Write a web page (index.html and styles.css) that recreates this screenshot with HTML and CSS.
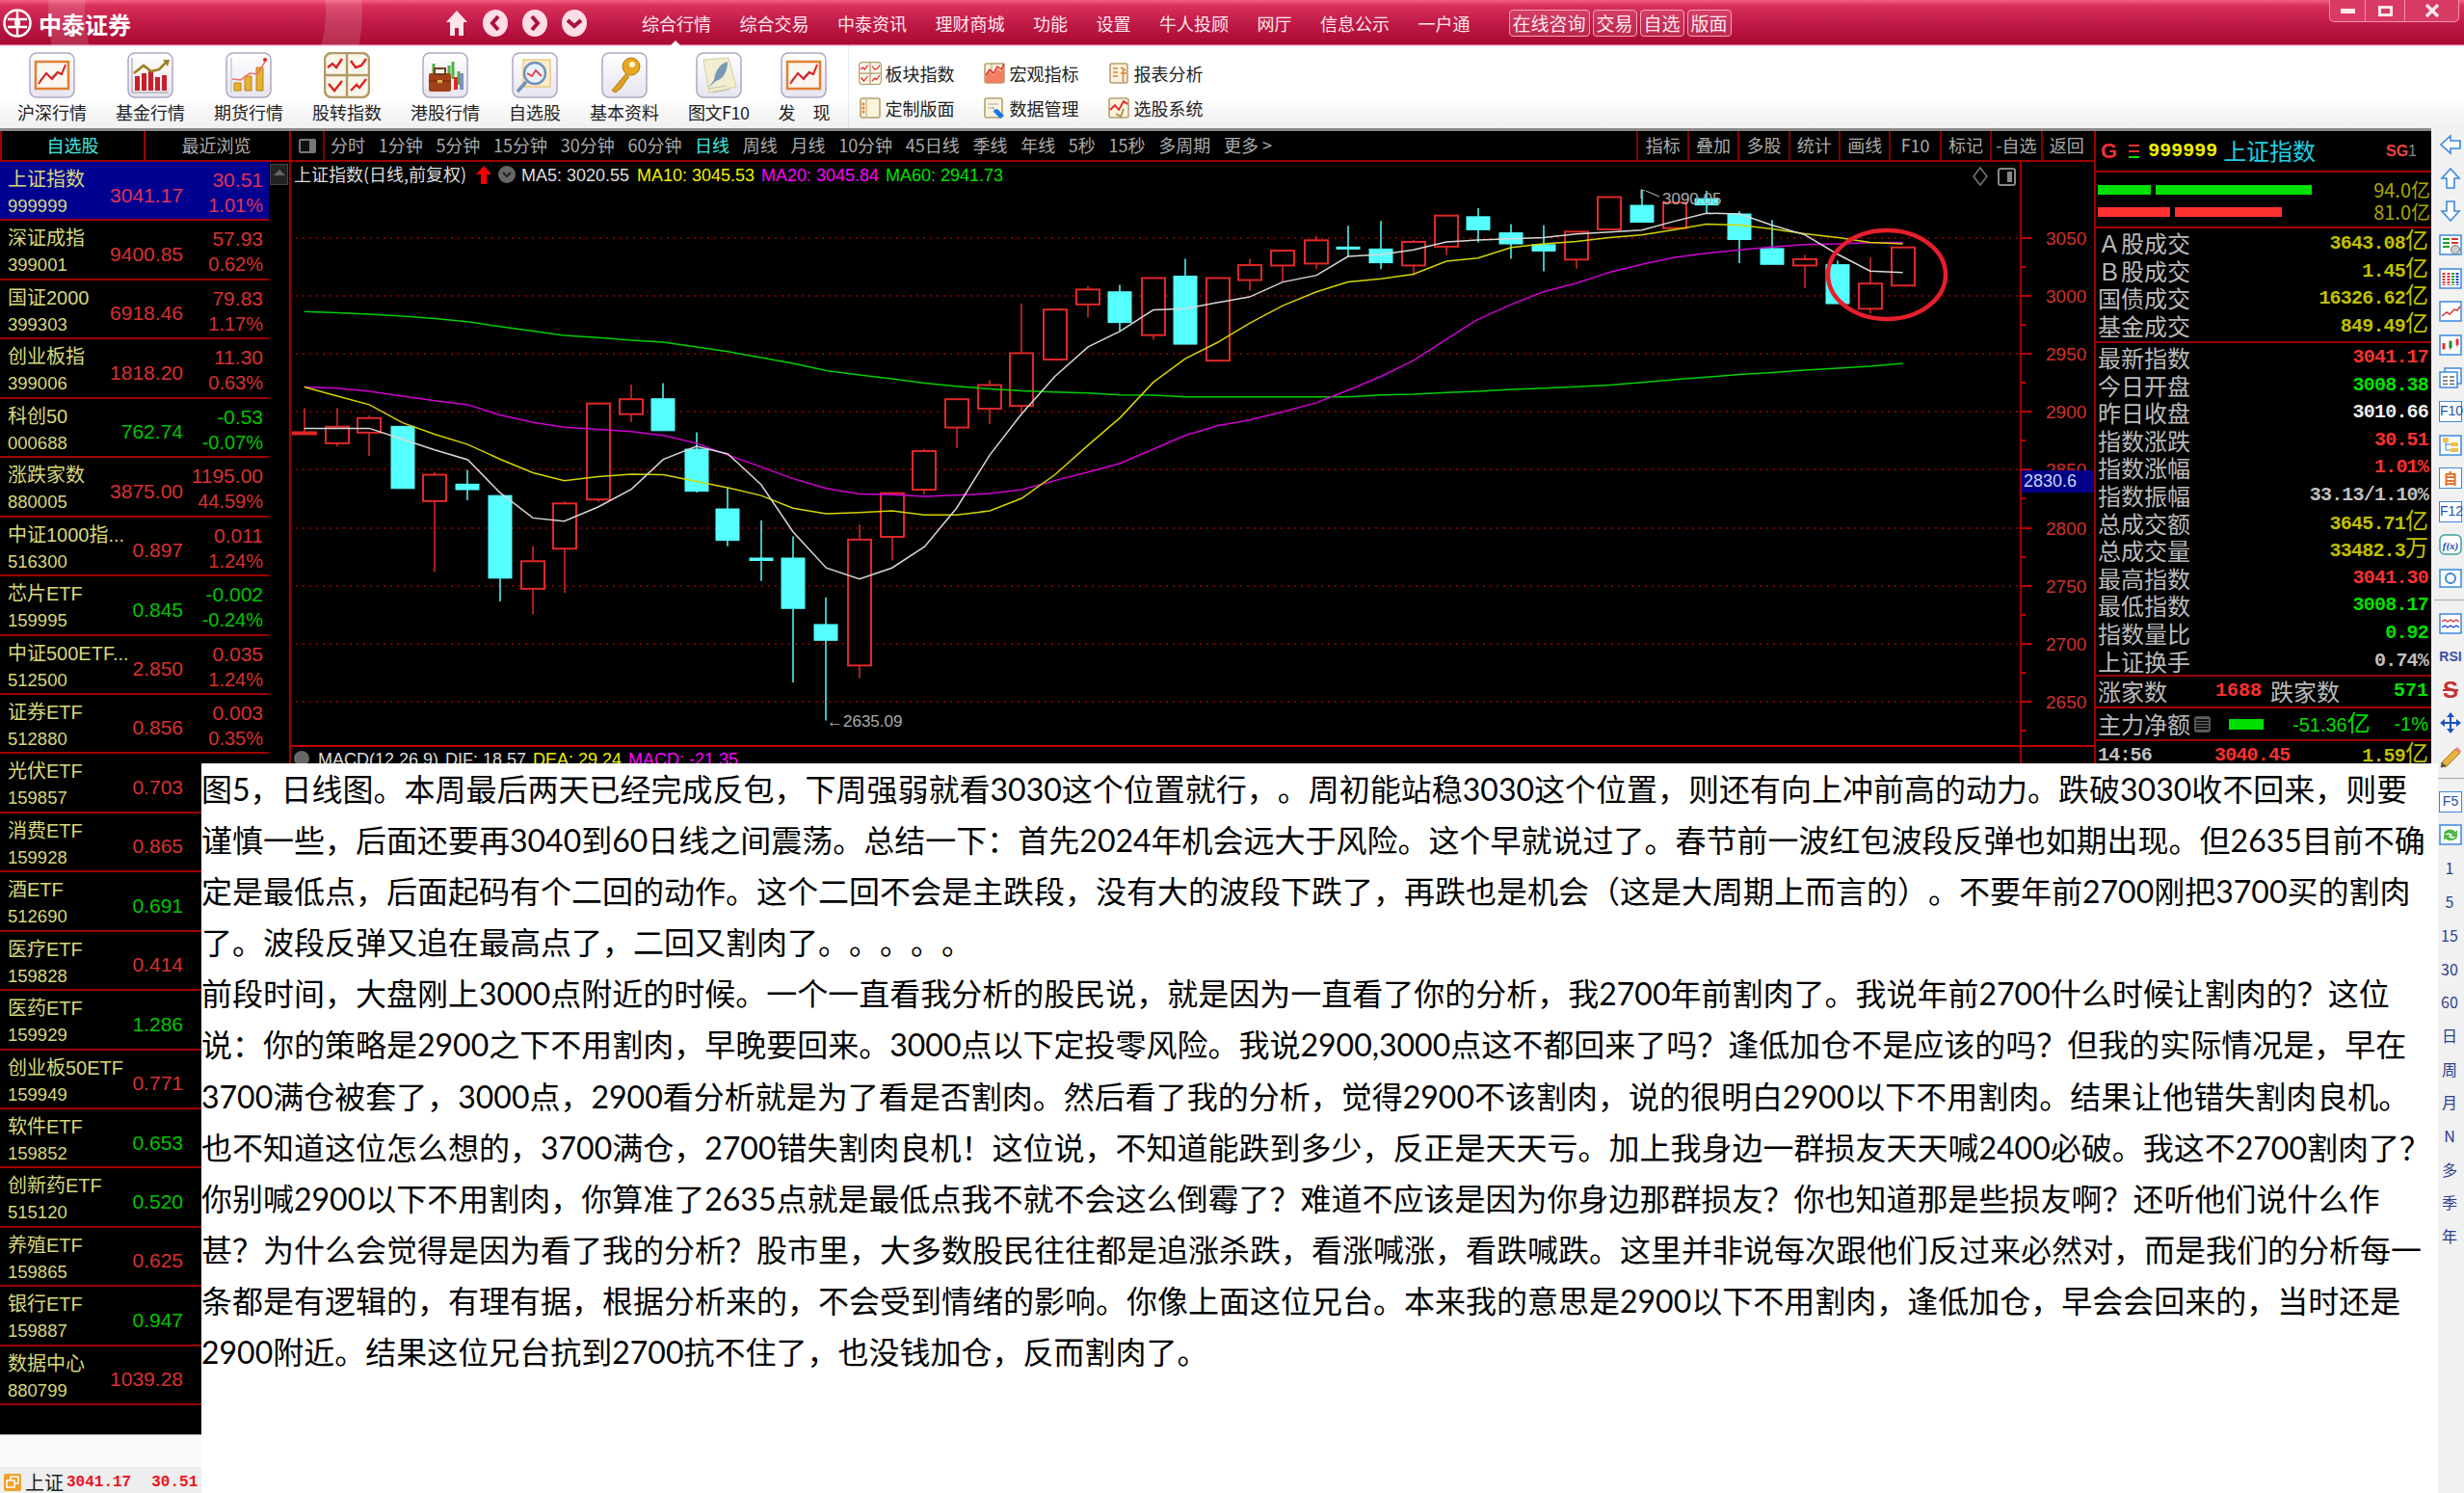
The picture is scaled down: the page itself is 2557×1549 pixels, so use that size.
FILE: index.html

```html
<!DOCTYPE html>
<html>
<head>
  <meta charset="UTF-8">
  <title>中泰证券 - 上证指数</title>
  <link rel="stylesheet" href="styles.css">
</head>
<body>

<svg class="defs" width="0" height="0">
  <defs>
    <linearGradient id="tile" x1="0" y1="0" x2="0" y2="1"><stop offset="0" stop-color="#fff"/><stop offset="1" stop-color="#e6e4ee"/></linearGradient>
    <symbol id="tile-frame" viewBox="0 0 48 48"><rect x="1" y="1" width="46" height="46" rx="7" fill="url(#tile)" stroke="#b0a6c6" stroke-width="1.5"/></symbol>
    <symbol id="ico-market" viewBox="0 0 48 48">
      <use href="#tile-frame"/>
      <rect x="7" y="10" width="34" height="28" fill="#fbf6ee" stroke="#e08030" stroke-width="2.5"/>
      <path d="M11 30l7-8 5 5 7-7" fill="none" stroke="#7c9ab0" stroke-width="1.5"/>
      <path d="M10 33l8-11 6 6 6-7 4 2 4-10" fill="none" stroke="#e02020" stroke-width="2"/>
    </symbol>
    <symbol id="ico-four" viewBox="0 0 48 48">
      <rect x="1" y="1" width="46" height="46" rx="7" fill="#fbf6ea" stroke="#b09a68" stroke-width="2.5"/>
      <path d="M24 2v44M2 24h44" stroke="#b09a68" stroke-width="2.5"/>
      <path d="M4 16l5-4 4 4 6-9M28 9l5 7 6-2 5-7M5 33l6 7 8-10M28 40l6-6 3 3 7-9" fill="none" stroke="#e02020" stroke-width="2.4"/>
    </symbol>
  </defs>
</svg>

<div class="app">

  <header class="titlebar">
    <div class="logo">
      <svg class="logo-mark" viewBox="0 0 30 30"><circle cx="15" cy="15" r="13.5" fill="none" stroke="#fff" stroke-width="2.6"/><path d="M15 3v24M5 11h8a4 4 0 0 1 0 8H5M25 11h-8a4 4 0 0 0 0 8h8" fill="none" stroke="#fff" stroke-width="2.4"/></svg>
      <span>中泰证券</span>
    </div>
    <div class="nav-icons">
      <svg class="nav-home" viewBox="0 0 24 28"><path d="M12 1L1 13h4v14h5v-8h4v8h5V13h4z" fill="#ffe4ea"/></svg>
      <svg class="nav-round" viewBox="0 0 26 28"><ellipse cx="13" cy="14" rx="13" ry="14" fill="#ffdde5"/><path d="M16 7l-6 7 6 7" fill="none" stroke="#a8123c" stroke-width="4"/></svg>
      <svg class="nav-round" viewBox="0 0 26 28"><ellipse cx="13" cy="14" rx="13" ry="14" fill="#ffdde5"/><path d="M10 7l6 7-6 7" fill="none" stroke="#a8123c" stroke-width="4"/></svg>
      <svg class="nav-round" viewBox="0 0 26 28"><ellipse cx="13" cy="14" rx="13" ry="14" fill="#ffdde5"/><path d="M6 11l7 6 7-6" fill="none" stroke="#a8123c" stroke-width="4"/></svg>
    </div>
    <nav class="menu">
      <span class="menu-current">综合行情</span>
      <span>综合交易</span>
      <span>中泰资讯</span>
      <span>理财商城</span>
      <span>功能</span>
      <span>设置</span>
      <span>牛人投顾</span>
      <span>网厅</span>
      <span>信息公示</span>
      <span>一户通</span>
    </nav>
    <div class="title-btns">
      <span>在线咨询</span>
      <span>交易</span>
      <span>自选</span>
      <span>版面</span>
    </div>
    <div class="win-btns">
      <div class="win-min"><i></i></div>
      <div class="win-max"><i></i></div>
      <div class="win-close"><svg viewBox="0 0 14 14"><path d="M1 1l12 12M13 1L1 13" stroke="#ffe8ee" stroke-width="3.4"/></svg></div>
    </div>
  </header>

  <section class="toolbar">
    <div class="tool"><svg class="tool-ico"><use href="#ico-market"/></svg><span>沪深行情</span></div>
    <div class="tool">
      <svg class="tool-ico" viewBox="0 0 48 48"><use href="#tile-frame"/><path d="M5 6v36h38" fill="none" stroke="#999" stroke-width="1"/><path d="M8 40V25h5v15zM15 40V22h5v18zM22 40V19h5v21zM29 40V26h5v14zM36 40V24h5v16z" fill="#c8202a"/><path d="M7 22l10-8 8 6 8-2 8-8" fill="none" stroke="#a08020" stroke-width="2.6"/><path d="M37 8l7 0-2 7z" fill="#a08020"/></svg>
      <span>基金行情</span>
    </div>
    <div class="tool">
      <svg class="tool-ico" viewBox="0 0 48 48"><use href="#tile-frame"/><path d="M6 6v36" stroke="#bbb"/><path d="M9 40V32h7v8zM20 40V25h7v15zM32 40V16h7v24z" fill="#e8b030" stroke="#b88410"/><path d="M7 28l9 1 9-7 8 1 8-13" fill="none" stroke="#f07070" stroke-width="1.6"/><circle cx="41" cy="8" r="2" fill="#e02020"/></svg>
      <span>期货行情</span>
    </div>
    <div class="tool"><svg class="tool-ico"><use href="#ico-four"/></svg><span>股转指数</span></div>
    <div class="tool">
      <svg class="tool-ico" viewBox="0 0 48 48"><use href="#tile-frame"/><path d="M12 30V12M38 34V20M32 28V10M28 24V14" stroke="#50b040" stroke-width="3"/><rect x="33" y="26" width="4" height="13" fill="#e02828"/><rect x="39" y="22" width="4" height="17" fill="#8090c0"/><rect x="7" y="22" width="23" height="19" rx="2" fill="#a04018"/><rect x="13" y="17" width="11" height="6" fill="none" stroke="#704020" stroke-width="2"/><path d="M7 30h23" stroke="#702808"/><rect x="16" y="29" width="5" height="3" fill="#e0b040"/></svg>
      <span>港股行情</span>
    </div>
    <div class="tool">
      <svg class="tool-ico" viewBox="0 0 48 48"><use href="#tile-frame"/><rect x="12" y="8" width="28" height="28" fill="#fbeecb" stroke="#e8b850"/><circle cx="24" cy="22" r="11" fill="#e8f2fa" stroke="#7090b8" stroke-width="2.4"/><path d="M16 22l5 3 4-6 6 6" fill="none" stroke="#e04040" stroke-width="1.8"/><path d="M15 31L6 41" stroke="#7090b8" stroke-width="3.4"/></svg>
      <span>自选股</span>
    </div>
    <div class="tool">
      <svg class="tool-ico" viewBox="0 0 48 48"><use href="#tile-frame"/><circle cx="31" cy="15" r="9" fill="#e8a820" stroke="#b07c10"/><circle cx="32" cy="13" r="3" fill="#fff6d8"/><path d="M26 22L11 40l4 2 3-3 2-1 9-13" fill="#e0a020" stroke="#b07c10"/></svg>
      <span>基本资料</span>
    </div>
    <div class="tool">
      <svg class="tool-ico" viewBox="0 0 48 48"><use href="#tile-frame"/><path d="M8 8l26-2 8 30-28 6z" fill="#f2eed2" stroke="#d8cf98"/><path d="M33 10c-8 2-13 10-14 19l-6 8 8-7c8-2 12-11 12-20z" fill="#7898b8"/><path d="M14 38l18-3M17 42l18-3" stroke="#c0c0b0"/></svg>
      <span class="tool-f10">图文F10</span>
    </div>
    <div class="tool"><svg class="tool-ico"><use href="#ico-market"/></svg><span>发&#12288;现</span></div>

    <div class="tool-grid">
      <div class="tool-sm"><svg class="tool-sm-ico" viewBox="0 0 48 48"><use href="#ico-four"/></svg><span>板块指数</span></div>
      <div class="tool-sm">
        <svg class="tool-sm-ico" viewBox="0 0 24 24"><rect x="2" y="2" width="20" height="20" rx="2" fill="#fbf3dd" stroke="#b8a070" stroke-width="1.6"/><path d="M9 2v20" stroke="#b8a070"/><path d="M3 22V15l4-5 4 4 4-7 4 3 3-7v19z" fill="#f08060"/><path d="M3 14l4-6 4 4 4-7 4 3 3-6" fill="none" stroke="#e02020" stroke-width="1.4"/></svg>
        <span>宏观指标</span>
      </div>
      <div class="tool-sm">
        <svg class="tool-sm-ico" viewBox="0 0 24 24"><rect x="3" y="2" width="18" height="20" rx="2" fill="#fbf3dd" stroke="#b8a070" stroke-width="1.6"/><path d="M6 7h5M6 11h5M6 15h5M14 6l5 3M14 12h6M16.5 9v12" stroke="#e08030" stroke-width="1.6"/></svg>
        <span>报表分析</span>
      </div>
      <div class="tool-sm">
        <svg class="tool-sm-ico" viewBox="0 0 24 24"><rect x="2" y="2" width="20" height="20" rx="2" fill="#fbf3dd" stroke="#b8a070" stroke-width="1.6"/><path d="M8 3v18" stroke="#b8a070"/><circle cx="5" cy="8" r="1.5" fill="#e8802c"/><circle cx="5" cy="12" r="1.5" fill="#e8802c"/><circle cx="5" cy="16" r="1.5" fill="#e8802c"/></svg>
        <span>定制版面</span>
      </div>
      <div class="tool-sm">
        <svg class="tool-sm-ico" viewBox="0 0 24 24"><rect x="2" y="2" width="18" height="20" rx="2" fill="#fbf3dd" stroke="#b8a070" stroke-width="1.6"/><path d="M5 8h11M5 12h7" stroke="#aaa"/><path d="M9 10l3 3-1 3 7 7 4-3-7-7-3 1-3-4z" fill="#1878e8"/></svg>
        <span>数据管理</span>
      </div>
      <div class="tool-sm">
        <svg class="tool-sm-ico" viewBox="0 0 24 24"><rect x="2" y="2" width="20" height="20" rx="2" fill="#fbf3dd" stroke="#b8a070" stroke-width="1.6"/><path d="M3 14l5-5 4 5 5-9 4 3" fill="none" stroke="#e02020" stroke-width="1.8"/><path d="M9 18l5 3 3-8" fill="none" stroke="#b09050" stroke-width="2"/></svg>
        <span>选股系统</span>
      </div>
    </div>
  </section>

  <div class="body">
    <div class="panes">
      <div class="workspace">

        <aside class="watchlist">
          <div class="tabs">
            <span class="tab tab-on">自选股</span>
            <span class="tab">最近浏览</span>
          </div>
          <div class="list-wrap">
            <div class="rows">
              <div class="row up active"><span class="name">上证指数</span><span class="code">999999</span><span class="price">3041.17</span><span class="chg">30.51</span><span class="pct">1.01%</span></div>
              <div class="row up"><span class="name">深证成指</span><span class="code">399001</span><span class="price">9400.85</span><span class="chg">57.93</span><span class="pct">0.62%</span></div>
              <div class="row up"><span class="name">国证2000</span><span class="code">399303</span><span class="price">6918.46</span><span class="chg">79.83</span><span class="pct">1.17%</span></div>
              <div class="row up"><span class="name">创业板指</span><span class="code">399006</span><span class="price">1818.20</span><span class="chg">11.30</span><span class="pct">0.63%</span></div>
              <div class="row down"><span class="name">科创50</span><span class="code">000688</span><span class="price">762.74</span><span class="chg">-0.53</span><span class="pct">-0.07%</span></div>
              <div class="row up"><span class="name">涨跌家数</span><span class="code">880005</span><span class="price">3875.00</span><span class="chg">1195.00</span><span class="pct">44.59%</span></div>
              <div class="row up"><span class="name">中证1000指...</span><span class="code">516300</span><span class="price">0.897</span><span class="chg">0.011</span><span class="pct">1.24%</span></div>
              <div class="row down"><span class="name">芯片ETF</span><span class="code">159995</span><span class="price">0.845</span><span class="chg">-0.002</span><span class="pct">-0.24%</span></div>
              <div class="row up"><span class="name">中证500ETF...</span><span class="code">512500</span><span class="price">2.850</span><span class="chg">0.035</span><span class="pct">1.24%</span></div>
              <div class="row up"><span class="name">证券ETF</span><span class="code">512880</span><span class="price">0.856</span><span class="chg">0.003</span><span class="pct">0.35%</span></div>
              <div class="row up"><span class="name">光伏ETF</span><span class="code">159857</span><span class="price">0.703</span></div>
              <div class="row up"><span class="name">消费ETF</span><span class="code">159928</span><span class="price">0.865</span></div>
              <div class="row down"><span class="name">酒ETF</span><span class="code">512690</span><span class="price">0.691</span></div>
              <div class="row up"><span class="name">医疗ETF</span><span class="code">159828</span><span class="price">0.414</span></div>
              <div class="row down"><span class="name">医药ETF</span><span class="code">159929</span><span class="price">1.286</span></div>
              <div class="row up"><span class="name">创业板50ETF</span><span class="code">159949</span><span class="price">0.771</span></div>
              <div class="row down"><span class="name">软件ETF</span><span class="code">159852</span><span class="price">0.653</span></div>
              <div class="row down"><span class="name">创新药ETF</span><span class="code">515120</span><span class="price">0.520</span></div>
              <div class="row up"><span class="name">养殖ETF</span><span class="code">159865</span><span class="price">0.625</span></div>
              <div class="row down"><span class="name">银行ETF</span><span class="code">159887</span><span class="price">0.947</span></div>
              <div class="row up"><span class="name">数据中心</span><span class="code">880799</span><span class="price">1039.28</span></div>
            </div>
            <div class="scroll"><div class="scroll-up"></div></div>
          </div>
        </aside>

        <main class="chart-col">
          <div class="periods">
            <div class="period-toggle"><i></i></div>
            <div class="period-list">
              <span>分时</span><span>1分钟</span><span>5分钟</span><span>15分钟</span><span>30分钟</span><span>60分钟</span>
              <span class="period-on">日线</span><span>周线</span><span>月线</span><span>10分钟</span><span>45日线</span>
              <span>季线</span><span>年线</span><span>5秒</span><span>15秒</span><span>多周期</span><span>更多 &gt;</span>
            </div>
            <div class="period-tabs">
              <span>指标</span><span>叠加</span><span>多股</span><span>统计</span><span>画线</span><span>F10</span><span>标记</span><span>-自选</span><span>返回</span>
            </div>
          </div>

          <svg id="chart" class="chart" viewBox="300 168 1873 712">
            <g id="grid"></g>
            <g id="candles"></g>
            <g id="averages"></g>

            <text x="305" y="188" class="t-cap t-white">上证指数(日线,前复权)</text>
            <path d="M502 172l8 9h-5v10h-6v-10h-5z" fill="#f00"/>
            <circle cx="526" cy="181" r="9" fill="#666"/>
            <path d="M522 179l4 4 4-4" fill="none" stroke="#222" stroke-width="2"/>
            <text x="541" y="188" class="t-num t-white">MA5: 3020.55</text>
            <text x="661" y="188" class="t-num t-yellow">MA10: 3045.53</text>
            <text x="790" y="188" class="t-num t-magenta">MA20: 3045.84</text>
            <text x="919" y="188" class="t-num t-green">MA60: 2941.73</text>

            <path d="M2055 174l7 9-7 9-7-9z" fill="none" stroke="#777" stroke-width="1.5"/>
            <rect x="2074" y="175" width="17" height="17" rx="2" fill="none" stroke="#888" stroke-width="2"/>
            <rect x="2083" y="178" width="5" height="11" fill="#888"/>

            <path d="M1703 197v9M1703 197l4 1M1708 198l14 6" stroke="#bbb" fill="none"/>
            <text x="1725" y="212" class="t-mark">3090.05</text>
            <text x="858" y="754" class="t-mark">←2635.09</text>

            <ellipse cx="1958" cy="285" rx="61" ry="46" fill="none" stroke="#e81e2c" stroke-width="4.5"/>

            <rect x="2098" y="488" width="76" height="23" fill="#000088"/>
            <text x="2100" y="505" class="t-tag">2830.6</text>

            <circle cx="313" cy="787" r="8" fill="#666"/>
            <text x="330" y="794" class="t-num t-white">MACD(12,26,9)</text>
            <text x="462" y="794" class="t-num t-white">DIF: 18.57</text>
            <text x="553" y="794" class="t-num t-yellow">DEA: 29.24</text>
            <text x="652" y="794" class="t-num t-magenta">MACD: -21.35</text>
          </svg>
        </main>

        <aside class="quote">
          <div class="q-head">
            <span class="q-g">G</span>
            <span class="q-menu"><i></i><i></i><i></i></span>
            <span class="q-code">999999</span>
            <span class="q-name">上证指数</span>
            <span class="q-sg"><b>SG</b>1</span>
          </div>
          <div class="q-flow">
            <div class="flow-row"><div class="flow-bars"><i class="bar-green flow-a"></i><i class="bar-green flow-b"></i></div><span>94.0亿</span></div>
            <div class="flow-row"><div class="flow-bars"><i class="bar-red flow-c"></i><i class="bar-red flow-d"></i></div><span>81.0亿</span></div>
          </div>
          <div class="q-group q-deals">
            <div class="q-row"><span>Ａ股成交</span><b class="v-yellow">3643.08<small>亿</small></b></div>
            <div class="q-row"><span>Ｂ股成交</span><b class="v-yellow">1.45<small>亿</small></b></div>
            <div class="q-row"><span>国债成交</span><b class="v-yellow">16326.62<small>亿</small></b></div>
            <div class="q-row"><span>基金成交</span><b class="v-yellow">849.49<small>亿</small></b></div>
          </div>
          <div class="q-group q-index">
            <div class="q-row"><span>最新指数</span><b class="v-red">3041.17</b></div>
            <div class="q-row"><span>今日开盘</span><b class="v-green">3008.38</b></div>
            <div class="q-row"><span>昨日收盘</span><b class="v-white">3010.66</b></div>
            <div class="q-row"><span>指数涨跌</span><b class="v-red">30.51</b></div>
            <div class="q-row"><span>指数涨幅</span><b class="v-red">1.01%</b></div>
            <div class="q-row"><span>指数振幅</span><b class="v-gray">33.13/1.10%</b></div>
            <div class="q-row"><span>总成交额</span><b class="v-yellow">3645.71<small>亿</small></b></div>
            <div class="q-row"><span>总成交量</span><b class="v-yellow">33482.3<small>万</small></b></div>
            <div class="q-row"><span>最高指数</span><b class="v-red">3041.30</b></div>
            <div class="q-row"><span>最低指数</span><b class="v-green">3008.17</b></div>
            <div class="q-row"><span>指数量比</span><b class="v-green">0.92</b></div>
            <div class="q-row"><span>上证换手</span><b class="v-gray">0.74%</b></div>
          </div>
          <div class="q-group q-breadth">
            <span>涨家数</span><b class="v-red b-up">1688</b><span class="b-label">跌家数</span><b class="v-green b-down">571</b>
          </div>
          <div class="q-group q-main">
            <span>主力净额</span>
            <i class="q-list-ico"></i>
            <i class="q-main-bar"></i>
            <b class="v-green q-main-val">-51.36<small>亿</small></b>
            <b class="v-green q-main-pct">-1%</b>
          </div>
          <div class="q-tick">
            <b class="v-gray">14:56</b><b class="v-red tick-price">3040.45</b><b class="v-yellow tick-vol">1.59<small>亿</small></b>
          </div>
        </aside>
      </div>

      <footer class="foot">
        <div class="foot-blank"></div>
        <div class="foot-index">
          <svg class="foot-ico" viewBox="0 0 20 20"><rect x="1" y="1" width="18" height="18" rx="2" fill="#eda12c"/><rect x="8" y="4" width="8" height="7" fill="none" stroke="#fff" stroke-width="1.5"/><rect x="4" y="8" width="8" height="7" fill="#eda12c" stroke="#fff" stroke-width="1.5"/></svg>
          <span class="foot-name">上证</span>
          <b>3041.17</b>
          <b class="foot-chg">30.51</b>
        </div>
      </footer>
    </div>

    <aside class="sidebar">
      <div class="side-item"><svg viewBox="0 0 24 24"><path d="M2 12l10-9v5h10v8H12v5z" fill="#fff" stroke="#3a88e0" stroke-width="1.6"/></svg></div>
      <div class="side-item"><svg viewBox="0 0 24 24"><path d="M12 2l9 10h-5v10H8V12H3z" fill="#fff" stroke="#3a88e0" stroke-width="1.6"/></svg></div>
      <div class="side-item"><svg viewBox="0 0 24 24"><path d="M12 22l9-10h-5V2H8v10H3z" fill="#fff" stroke="#3a88e0" stroke-width="1.6"/></svg></div>
      <div class="side-item"><svg viewBox="0 0 24 24"><rect x="1" y="2" width="22" height="20" fill="#fff" stroke="#3a88e0" stroke-width="1.5"/><path d="M4 6h7M4 10h7M4 14h7" stroke="#20a030" stroke-width="2"/><path d="M13 6h7M13 10h7" stroke="#e03030" stroke-width="2"/><circle cx="17" cy="17" r="4.5" fill="#ccc" stroke="#777"/></svg></div>
      <div class="side-item"><svg viewBox="0 0 24 24"><rect x="1" y="2" width="22" height="20" fill="#fff" stroke="#3a88e0" stroke-width="1.5"/><path d="M5 6v13M10 6v13" stroke="#e03030" stroke-width="3" stroke-dasharray="2 1"/><path d="M14.5 6v13" stroke="#20a030" stroke-width="3" stroke-dasharray="2 1"/><path d="M19 6v13" stroke="#2040e0" stroke-width="3" stroke-dasharray="2 1"/></svg></div>
      <div class="side-item"><svg viewBox="0 0 24 24"><rect x="1" y="2" width="22" height="20" fill="#fff" stroke="#3a88e0" stroke-width="1.5"/><path d="M3 17l5-4 3 2 5-5 3 1 3-4" fill="none" stroke="#e03030" stroke-width="1.5"/></svg></div>
      <div class="side-item"><svg viewBox="0 0 24 24"><rect x="1" y="2" width="22" height="20" fill="#fff" stroke="#3a88e0" stroke-width="1.5"/><path d="M5 10v7M12 7v10M19 5v9" stroke="#e03030" stroke-width="1"/><rect x="3.5" y="10" width="3" height="6" fill="#e03030"/><rect x="10.5" y="8" width="3" height="7" fill="#109030"/><rect x="17.5" y="6" width="3" height="6" fill="#e03030"/></svg></div>
      <div class="side-item"><svg viewBox="0 0 24 24"><rect x="6" y="2" width="17" height="16" fill="#fff" stroke="#3a88e0" stroke-width="1.5"/><rect x="1" y="6" width="18" height="16" fill="#fff" stroke="#3a88e0" stroke-width="1.5"/><path d="M4 11h5M11 11h5M4 15h5M11 15h5M4 18.5h5M11 18.5h5" stroke="#666" stroke-width="1.4"/></svg></div>
      <div class="side-item side-text-box"><span>F10</span></div>
      <div class="side-item"><svg viewBox="0 0 24 24"><rect x="1" y="2" width="22" height="20" fill="#fff" stroke="#3a88e0" stroke-width="1.5"/><rect x="4" y="4" width="6" height="5" fill="#f0c040"/><rect x="12" y="9" width="8" height="4" fill="#f0c040"/><rect x="12" y="15" width="8" height="4" fill="#f0c040"/><path d="M7 9v8h5M7 11h5" fill="none" stroke="#3a88e0"/></svg></div>
      <div class="side-item side-text-box side-zi"><span>自</span></div>
      <div class="side-item side-text-box"><span>F12</span></div>
      <div class="side-item"><svg viewBox="0 0 24 24"><rect x="1" y="2" width="22" height="20" rx="5" fill="#fff" stroke="#40a0a0" stroke-width="1.5"/><text x="12" y="17" class="side-fx">f(x)</text></svg></div>
      <div class="side-item"><svg viewBox="0 0 24 24"><rect x="1" y="3" width="22" height="18" fill="#fff" stroke="#3a88e0" stroke-width="1.5"/><circle cx="12" cy="12" r="5" fill="none" stroke="#3a88e0" stroke-width="2"/></svg></div>
      <div class="side-sep"></div>
      <div class="side-item"><svg viewBox="0 0 24 24"><rect x="1" y="2" width="22" height="20" fill="#fff" stroke="#3a88e0" stroke-width="1.5"/><path d="M3 10l3-2 3 2 3-2 3 2 3-2 3 2" fill="none" stroke="#e03030" stroke-width="1.4"/><path d="M3 16l3-2 3 2 3-2 3 2 3-2 3 2" fill="none" stroke="#2040e0" stroke-width="1.4"/></svg></div>
      <div class="side-item side-rsi">RSI</div>
      <div class="side-item side-dollar">S</div>
      <div class="side-item"><svg viewBox="0 0 24 24"><path d="M12 1l4 5h-3v5h5V8l5 4-5 4v-3h-5v5h3l-4 5-4-5h3v-5H6v3l-5-4 5-4v3h5V6H8z" fill="#1a50c0"/></svg></div>
      <div class="side-item"><svg viewBox="0 0 24 24"><path d="M3 18L17 4l5 4L8 22l-6 1z" fill="#eab040" stroke="#a87820"/><path d="M17 4l2-2 4 4-1 2z" fill="#e88"/><path d="M2 23l1-5 5 4z" fill="#555"/></svg></div>
      <div class="side-sep"></div>
      <div class="side-item side-text-box"><span>F5</span></div>
      <div class="side-item"><svg viewBox="0 0 24 24"><rect x="1" y="2" width="22" height="20" fill="#fff" stroke="#3a88e0" stroke-width="1.5"/><path d="M5 11c1-5 9-6 12-2l2-2v7h-7l2-2c-2-2-6-2-7 0zM19 14c-1 4-9 6-12 2l-2 2v-6h7l-2 2c2 2 6 2 7 0z" fill="#50b848"/></svg></div>
      <div class="side-periods">
        <span>1</span><span>5</span><span>15</span><span>30</span><span>60</span><span>日</span><span>周</span><span>月</span><span>N</span><span>多</span><span>季</span><span>年</span>
      </div>
    </aside>
  </div>

  <article class="note">
    <p>图5，日线图。本周最后两天已经完成反包，下周强弱就看3030这个位置就行，。周初能站稳3030这个位置，则还有向上冲前高的动力。跌破3030收不回来，则要<br>谨慎一些，后面还要再3040到60日线之间震荡。总结一下：首先2024年机会远大于风险。这个早就说过了。春节前一波红包波段反弹也如期出现。但2635目前不确<br>定是最低点，后面起码有个二回的动作。这个二回不会是主跌段，没有大的波段下跌了，再跌也是机会（这是大周期上而言的）。不要年前2700刚把3700买的割肉<br>了。波段反弹又追在最高点了，二回又割肉了。。。。。</p>
    <p>前段时间，大盘刚上3000点附近的时候。一个一直看我分析的股民说，就是因为一直看了你的分析，我2700年前割肉了。我说年前2700什么时候让割肉的？这位<br>说：你的策略是2900之下不用割肉，早晚要回来。3000点以下定投零风险。我说2900,3000点这不都回来了吗？逢低加仓不是应该的吗？但我的实际情况是，早在<br>3700满仓被套了，3000点，2900看分析就是为了看是否割肉。然后看了我的分析，觉得2900不该割肉，说的很明白2900以下不用割肉。结果让他错失割肉良机。<br>也不知道这位怎么想的，3700满仓，2700错失割肉良机！这位说，不知道能跌到多少，反正是天天亏。加上我身边一群损友天天喊2400必破。我这不2700割肉了？<br>你别喊2900以下不用割肉，你算准了2635点就是最低点我不就不会这么倒霉了？难道不应该是因为你身边那群损友？你也知道那是些损友啊？还听他们说什么作<br>甚？为什么会觉得是因为看了我的分析？股市里，大多数股民往往都是追涨杀跌，看涨喊涨，看跌喊跌。这里并非说每次跟他们反过来必然对，而是我们的分析每一<br>条都是有逻辑的，有理有据，根据分析来的，不会受到情绪的影响。你像上面这位兄台。本来我的意思是2900以下不用割肉，逢低加仓，早会会回来的，当时还是<br>2900附近。结果这位兄台抗到2700抗不住了，也没钱加仓，反而割肉了。</p>
  </article>

</div>

<script src="chart.js"></script>
</body>
</html>
```

FILE: styles.css

```css
* { box-sizing: border-box; }
html, body { margin: 0; height: 100%; overflow: hidden; }
body {
  background: #000;
  color: #bbb;
  font-family: "Noto Sans CJK SC", "Liberation Sans", sans-serif;
  font-size: 18px;
  text-spacing-trim: space-all;
}
.defs { position: absolute; }
.app { position: relative; width: 2557px; height: 1549px; display: flex; flex-direction: column; overflow: hidden; }

/* title bar */
.titlebar {
  position: relative;
  height: 48px;
  flex: none;
  display: flex;
  align-items: center;
  overflow: hidden;
  color: #ffe6ec;
  background: linear-gradient(#f4607f 0, #d8305a 6px, #c01a48 24px, #aa0a30 46px, #fce 47px);
}
.titlebar::before {
  content: "";
  position: absolute;
  left: 50px;
  top: -150px;
  width: 250px;
  height: 250px;
  border-radius: 50%;
  border: 38px solid rgba(255, 255, 255, 0.14);
}
.logo { position: relative; display: flex; align-items: center; gap: 7px; width: 462px; padding-left: 3px; color: #fff; font-size: 24px; font-weight: 700; }
.logo-mark { width: 30px; height: 30px; }
.nav-icons { position: relative; display: flex; align-items: center; gap: 15px; width: 204px; }
.nav-home { width: 24px; height: 28px; }
.nav-round { width: 26px; height: 28px; }
.menu { display: flex; gap: 29.5px; }
.menu-current { position: relative; }
.menu-current::after {
  content: "";
  position: absolute;
  left: 29px;
  bottom: -11px;
  border: 6px solid transparent;
  border-top: 0;
  border-bottom-color: #fff;
}
.title-btns { display: flex; gap: 3px; margin-left: 40px; }
.title-btns span {
  height: 28px;
  line-height: 25px;
  padding: 0 3px;
  border: 1px solid #f8a2b8;
  border-radius: 4px;
  font-size: 19px;
  background: rgba(255, 255, 255, 0.1);
}
.win-btns {
  display: flex;
  align-self: flex-start;
  position: absolute;
  right: 5px;
  top: 0;
  height: 23px;
  border: 1px solid #f490a8;
  border-top: 0;
  border-radius: 0 0 5px 5px;
  background: #d93a64;
}
.win-btns > div { display: flex; align-items: center; justify-content: center; border-left: 1px solid #f490a8; }
.win-btns > div:first-child { border-left: 0; }
.win-min { width: 36px; }
.win-max { width: 41px; }
.win-close { width: 56px; }
.win-min i { width: 15px; height: 5px; background: #ffe8ee; }
.win-max i { width: 15px; height: 11px; border: 3px solid #ffe8ee; }
.win-close svg { width: 14px; height: 14px; }

/* toolbar */
.toolbar {
  height: 88px;
  flex: none;
  display: flex;
  gap: 30px;
  padding: 6px 0 0 18px;
  background: linear-gradient(#fff 60%, #f0f0f0);
  border-bottom: 3px solid #8a8a8a;
  color: #222;
}
.tool { display: flex; flex-direction: column; align-items: center; line-height: 26px; }
.tool-ico { width: 48px; height: 48px; margin-bottom: 1px; }
.tool-f10 { letter-spacing: -0.5px; }
.tool-grid {
  display: grid;
  grid-template-columns: 129px 129px 129px;
  grid-auto-rows: 36px;
  margin: -6px 0 0 -11px;
  padding: 10px 0 0 10px;
  border-left: 1px dotted #c8d8e8;
}
.tool-sm { display: flex; align-items: center; gap: 3px; }
.tool-sm-ico { width: 24px; height: 24px; }

/* layout below the bars */
.body { flex: 1; display: flex; min-height: 0; }
.panes { width: 2523px; flex: none; display: flex; flex-direction: column; }
.workspace { height: 1352px; flex: none; display: flex; background: #000; }
.foot { flex: 1; background: #fff; }
.foot-blank { height: 34px; background: #f9f9f9; border-top: 1px solid #aaa; }
.foot-index { height: 27px; display: flex; align-items: flex-start; background: #eee; padding: 6px 0 0 3px; color: #222; }
.foot-ico { width: 20px; height: 20px; flex: none; }
.foot-name { margin: 0 3px; font-size: 20px; line-height: 20px; }
.foot-index b { font: 700 16px/20px "Liberation Mono", monospace; color: #f01020; }
.foot-index .foot-chg { margin-left: 21px; }

/* watch list */
.watchlist { width: 300px; flex: none; display: flex; flex-direction: column; }
.tabs { height: 32px; flex: none; display: flex; border-bottom: 2px solid #a00000; }
.tab { width: 149px; text-align: center; line-height: 29px; border-left: 2px solid #a00000; color: #aaa; }
.tab-on { color: #40e8e0; }
.list-wrap { display: flex; }
.rows { width: 279px; flex: none; }
.scroll { flex: 1; padding: 2px 1px; }
.scroll-up { position: relative; height: 22px; background: #222; border: 1px solid #444; }
.scroll-up::after {
  content: "";
  position: absolute;
  left: 3px;
  top: 5px;
  border: 6px solid transparent;
  border-top: 0;
  border-bottom-color: #666;
}
.row {
  height: 61.45px;
  display: grid;
  grid-template-columns: 182px 83px;
  grid-template-rows: 27px 27px;
  padding: 5px 0 0 8px;
  border-bottom: 2px solid #a00000;
  font-family: "Liberation Sans", "Noto Sans CJK SC", sans-serif;
  white-space: nowrap;
}
.row.active { background: #000090; }
.name { grid-area: 1 / 1; font-size: 20px; line-height: 27px; color: #d8d87c; }
.code { grid-area: 2 / 1; font-size: 18.5px; line-height: 27px; color: #d8d87c; }
.price { grid-area: 1 / 1 / 3 / 2; align-self: center; justify-self: end; padding-top: 5px; font-size: 21px; }
.chg { grid-area: 1 / 2; justify-self: end; font-size: 21px; line-height: 27px; }
.pct { grid-area: 2 / 2; justify-self: end; font-size: 20px; line-height: 27px; }
.row.up { color: #d83030; }
.row.down { color: #00c400; }
.row.active { color: #e03058; }

/* chart */
.chart-col { width: 1873px; flex: none; overflow: hidden; }
.periods { height: 32px; display: flex; border-bottom: 2px solid #a00000; border-left: 2px solid #a00000; color: #aaa; white-space: nowrap; }
.period-toggle { width: 35px; flex: none; display: flex; align-items: center; justify-content: center; border-right: 2px solid #800000; }
.period-toggle i { width: 18px; height: 15px; border: 2px solid #777; border-right-width: 7px; border-radius: 2px; background: #111; }
.period-list { display: flex; gap: 13.7px; padding-left: 6px; line-height: 29px; }
.period-on { color: #40e8e0; }
.period-tabs { display: flex; margin-left: auto; padding-right: 3px; }
.period-tabs span { width: 52.4px; text-align: center; line-height: 29px; border-left: 2px solid #800000; }
.chart { display: block; width: 1873px; height: 712px; }
.t-cap { font: 18px "Noto Sans CJK SC", sans-serif; }
.t-num { font: 18px "Liberation Sans", sans-serif; }
.t-mark { font: 17px "Liberation Sans", sans-serif; fill: #aaa; }
.t-tag { font: 18px "Liberation Sans", sans-serif; fill: #ccd4f0; }
.t-axis { font: 19px "Liberation Sans", sans-serif; fill: #d03030; }
.t-white { fill: #ddd; }
.t-yellow { fill: #f0f000; }
.t-magenta { fill: #ff00ff; }
.t-green { fill: #00e000; }

/* quote panel */
.quote { width: 350px; flex: none; height: 680px; border-left: 2px solid #a00000; white-space: nowrap; font-size: 24px; line-height: 28.6px; }
.quote b { font: 700 20px/28.6px "Liberation Mono", monospace; letter-spacing: -0.8px; }
.quote small { font: 400 24px/20px "Noto Sans CJK SC", sans-serif; letter-spacing: 0; }
.q-head { height: 43px; display: flex; align-items: center; padding-left: 5px; border-bottom: 2px solid #a00000; }
.q-g { color: #f03030; font: 700 22px "Liberation Sans", sans-serif; }
.q-menu { display: flex; flex-direction: column; gap: 4px; width: 11px; margin: 0 9px 0 12px; }
.q-menu i { height: 2px; background: #f03030; }
.q-menu i:last-child { background: #00e000; }
.q-code { color: #f0f000; font: 700 20px "Liberation Mono", monospace; width: 78px; }
.q-name { color: #20d0e0; font-size: 24px; }
.q-sg { margin-left: auto; margin-right: 15px; color: #888; font: 400 16px "Liberation Sans", sans-serif; }
.q-sg b { font: 700 16px "Liberation Sans", sans-serif; color: #f04040; letter-spacing: 0; }
.q-flow { height: 58px; padding: 6px 1px 0 2px; border-bottom: 2px solid #a00000; }
.flow-row { display: flex; justify-content: space-between; align-items: center; height: 23px; line-height: 23px; color: #a8a800; font-size: 20px; }
.flow-bars { display: flex; gap: 5px; }
.flow-bars i { height: 10px; }
.bar-green { background: #00e000; }
.bar-red { background: #ff3030; }
.flow-a { width: 55px; }
.flow-b { width: 162px; }
.flow-c { width: 75px; }
.flow-d { width: 111px; }
.q-group { border-bottom: 2px solid #a00000; padding: 0 3px 0 2px; }
.q-deals { height: 119px; padding-top: 1px; }
.q-index { height: 346px; padding-top: 1px; }
.q-row { display: flex; justify-content: space-between; height: 28.6px; }
.v-yellow { color: #c0c000; }
.v-red { color: #ff3030; }
.v-green { color: #00e000; }
.v-white { color: #eee; }
.v-gray { color: #c0c0c0; }
.q-breadth { height: 33px; display: flex; align-items: center; }
.q-breadth b { letter-spacing: 0; }
.b-up { width: 52px; margin-left: 50px; }
.b-label { margin-left: 5px; }
.b-down { margin-left: auto; }
.q-main { height: 34px; display: flex; align-items: center; }
.q-list-ico { width: 17px; height: 17px; margin-left: 4px; border: 2px solid #555; border-radius: 3px; background: repeating-linear-gradient(#666 0 1px, #111 1px 3px); }
.q-main-bar { width: 36px; height: 11px; margin-left: 19px; background: #00e000; }
.q-main .q-main-val { margin-left: 30px; font: 400 20px "Liberation Sans", sans-serif; letter-spacing: 0; }
.q-main .q-main-pct { margin-left: auto; font: 400 20px "Liberation Sans", sans-serif; letter-spacing: 0; }
.q-tick { display: flex; padding: 1px 3px 0 2px; }
.tick-price { margin-left: 65px; }
.tick-vol { margin-left: auto; }

/* right sidebar */
.sidebar { flex: 1; margin-top: -3px; display: flex; flex-direction: column; align-items: center; background: #f1f1f1; }
.side-item { height: 34.6px; flex: none; width: 34px; display: flex; align-items: center; justify-content: center; padding-left: 6px; }
.side-item svg { width: 24px; height: 24px; }
.side-text-box span {
  width: 24px;
  height: 22px;
  text-align: center;
  border: 1.5px solid #3a88e0;
  background: #fff;
  color: #2050b0;
  font: 14px/19px "Liberation Sans", sans-serif;
}
.side-zi span { color: #e86a20; font: 700 15px/19px "Noto Sans CJK SC", sans-serif; }
.side-fx { font: italic 700 11px "Liberation Serif", serif; fill: #2050b0; text-anchor: middle; }
.side-rsi { color: #3a50a8; font: 700 14px "Liberation Sans", sans-serif; }
.side-dollar { color: #c83030; font: 700 24px "Liberation Sans", sans-serif; text-decoration: line-through; }
.side-sep { width: 100%; height: 1px; flex: none; margin: 5px 0 6px 6px; background: #aaa; }
.side-periods { display: flex; flex-direction: column; align-items: center; padding-left: 4px; color: #2a3f8f; font-size: 16px; }
.side-periods span { height: 34.7px; line-height: 34.7px; }

/* text laid over the terminal */
.note {
  position: absolute;
  left: 209px;
  top: 792px;
  right: 27px;
  bottom: 0;
  background: #fff;
  color: #000;
  font-family: Lato, "Noto Sans CJK SC", sans-serif;
  font-size: 32px;
  line-height: 53.1px;
  white-space: nowrap;
}
.note p { margin: 0; }
```

FILE: chart.js

```js
// reading positions taken from the two halves of the chart
const NS = "http://www.w3.org/2000/svg";
const leftX = z => 280 + z * 0.638;
const rightX = z => 1260 + z * 0.574;
const toY = z => 160 + z * 0.408;

// [x, box top, box bottom, wick top, wick bottom, up?]
const leftCandles = [
  [56, 707, 712, 645, 712, 1], [110, 693, 735, 645, 743, 1], [162, 671, 708, 665, 768, 1],
  [216, 692, 850, 692, 850, 0], [268, 815, 882, 808, 1062, 1], [322, 839, 853, 803, 880, 0],
  [374, 868, 1078, 868, 1137, 0], [428, 1035, 1105, 997, 1170, 1], [479, 888, 1003, 883, 1115, 1],
  [534, 634, 878, 634, 884, 1], [588, 623, 661, 586, 681, 1], [640, 622, 703, 582, 703, 0],
  [694, 750, 857, 707, 860, 0], [745, 902, 982, 848, 997, 0], [799, 1027, 1033, 931, 1085, 0],
  [851, 1027, 1155, 972, 1343, 0], [905, 1196, 1236, 1127, 1440, 0], [959, 980, 1300, 942, 1332, 1],
  [1012, 862, 973, 862, 1033, 1], [1065, 755, 853, 750, 865, 1], [1117, 623, 695, 623, 747, 1],
  [1171, 587, 647, 575, 687, 1], [1223, 506, 640, 380, 658, 1], [1277, 395, 522, 395, 522, 1],
  [1331, 344, 382, 336, 415, 1], [1383, 350, 428, 332, 450, 0], [1437, 315, 460, 315, 472, 1],
  [1489, 310, 483, 266, 483, 0]
];
const rightCandles = [
  [7, 315, 525, 315, 525, 1], [64, 282, 320, 266, 347, 1], [124, 245, 283, 245, 325, 1],
  [185, 219, 278, 208, 292, 1], [242, 236, 240, 182, 262, 0], [302, 241, 276, 170, 292, 0],
  [360, 223, 283, 218, 308, 1], [420, 156, 235, 156, 256, 1], [477, 159, 192, 137, 224, 0],
  [537, 200, 228, 178, 266, 0], [595, 230, 246, 181, 298, 0], [655, 197, 268, 197, 291, 1],
  [715, 109, 191, 109, 191, 1], [773, 130, 173, 90, 173, 0], [833, 123, 188, 123, 188, 1],
  [890, 113, 129, 93, 152, 0], [950, 152, 217, 145, 277, 0], [1008, 240, 280, 167, 280, 0],
  [1068, 267, 283, 256, 340, 1], [1128, 281, 380, 270, 380, 0], [1186, 329, 393, 262, 405, 1],
  [1245, 237, 334, 237, 334, 1]
];

const averages = [
  { color: "#00d000", left: [[56,400],[110,403],[162,407],[216,412],[268,418],[322,426],[374,438],[428,450],[479,461],[534,466],[588,473],[640,478],[694,490],[745,502],[799,517],[851,532],[905,550],[959,561],[1012,571],[1065,582],[1117,590],[1171,597],[1223,602],[1277,605],[1331,607],[1383,612],[1437,613],[1489,617]],
    right: [[7,617],[64,617],[124,617],[185,617],[242,617],[302,612],[360,610],[420,606],[477,603],[537,598],[595,595],[655,591],[715,587],[773,580],[833,573],[890,567],[950,560],[1008,555],[1068,549],[1128,544],[1186,539],[1245,532]] },
  { color: "#d000d0", left: [[56,592],[110,595],[162,603],[216,615],[268,627],[322,637],[374,663],[428,682],[479,694],[534,700],[588,705],[640,715],[694,735],[745,765],[799,795],[851,825],[905,850],[959,864],[1012,866],[1065,870],[1117,867],[1171,863],[1223,853],[1277,830],[1331,808],[1383,786],[1437,750],[1489,715]],
    right: [[7,690],[64,676],[124,655],[185,632],[242,600],[302,565],[360,525],[420,470],[477,420],[537,382],[595,350],[655,328],[715,300],[773,280],[833,262],[890,252],[950,243],[1008,236],[1068,230],[1128,228],[1186,225],[1245,224]] },
  { color: "#d4d400", left: [[56,592],[110,615],[162,637],[216,683],[268,712],[322,738],[374,775],[428,810],[479,830],[534,820],[588,814],[640,815],[694,832],[745,848],[799,868],[851,900],[905,914],[959,911],[1012,907],[1065,917],[1117,917],[1171,907],[1223,875],[1277,815],[1331,740],[1383,670],[1437,580],[1489,520]],
    right: [[7,478],[64,430],[124,385],[185,350],[242,325],[302,317],[360,305],[420,272],[477,264],[537,237],[595,228],[655,222],[715,212],[773,205],[833,192],[890,178],[950,180],[1008,190],[1068,202],[1128,212],[1186,224],[1245,228]] },
  { color: "#d8d8d8", left: [[56,697],[162,697],[216,725],[268,752],[322,777],[374,860],[428,925],[479,933],[534,897],[588,852],[640,776],[694,743],[745,762],[799,840],[851,960],[905,1052],[959,1080],[1012,1052],[1065,998],[1117,900],[1171,765],[1223,660],[1277,565],[1331,490],[1383,450],[1437,396],[1489,393]],
    right: [[7,377],[64,363],[124,325],[185,308],[242,260],[302,255],[360,243],[420,223],[477,218],[537,215],[595,212],[655,203],[715,198],[773,193],[833,170],[890,150],[950,152],[1008,180],[1068,205],[1128,255],[1186,297],[1245,301]] }
];

const gridLines = [
  [247, "3050"], [307, "3000"], [367, "2950"], [427, "2900"], [487, "2850"],
  [548, "2800"], [608, "2750"], [668, "2700"], [728, "2650"]
];

function add(parent, tag, attrs, text) {
  const el = document.createElementNS(NS, tag);
  for (const key in attrs) el.setAttribute(key, attrs[key]);
  if (text) el.textContent = text;
  parent.appendChild(el);
  return el;
}

function drawGrid() {
  const g = document.getElementById("grid");
  gridLines.forEach(([y, label]) => {
    add(g, "line", { x1: 300, x2: 2097, y1: y, y2: y, stroke: "#a00000", "stroke-dasharray": "2 5", "stroke-width": 1.5 });
    add(g, "line", { x1: 2097, x2: 2108, y1: y, y2: y, stroke: "#c00000", "stroke-width": 2 });
    add(g, "line", { x1: 2097, x2: 2102, y1: y + 30, y2: y + 30, stroke: "#c00000", "stroke-width": 2 });
    add(g, "text", { x: 2123, y: y + 7, class: "t-axis" }, label);
  });
  add(g, "line", { x1: 2097, x2: 2097, y1: 168, y2: 880, stroke: "#a00000", "stroke-width": 2 });
  add(g, "line", { x1: 300, x2: 2173, y1: 774, y2: 774, stroke: "#c00000", "stroke-width": 2 });
  add(g, "line", { x1: 301, x2: 301, y1: 168, y2: 880, stroke: "#a00000", "stroke-width": 2 });
}

function drawCandle(g, xOf, [x, top, bottom, wickTop, wickBottom, up]) {
  const color = up ? "#e02828" : "#55ffff";
  const cx = Math.round(xOf(x));
  add(g, "line", { x1: cx, x2: cx, y1: toY(wickTop), y2: toY(wickBottom), stroke: color, "stroke-width": 1.5 });
  add(g, "rect", {
    x: cx - 12, y: toY(top), width: 24, height: Math.max(toY(bottom) - toY(top), 2),
    fill: up ? "#000" : color, stroke: color, "stroke-width": up ? 2 : 1
  });
}

function drawCandles() {
  const g = document.getElementById("candles");
  leftCandles.forEach(c => drawCandle(g, leftX, c));
  rightCandles.forEach(c => drawCandle(g, rightX, c));
}

function drawAverages() {
  const g = document.getElementById("averages");
  averages.forEach(line => {
    const pts = line.left.map(p => [leftX(p[0]), toY(p[1])])
      .concat(line.right.map(p => [rightX(p[0]), toY(p[1])]));
    add(g, "polyline", { points: pts.join(" "), fill: "none", stroke: line.color, "stroke-width": 1.5 });
  });
}

drawGrid();
drawCandles();
drawAverages();
```
